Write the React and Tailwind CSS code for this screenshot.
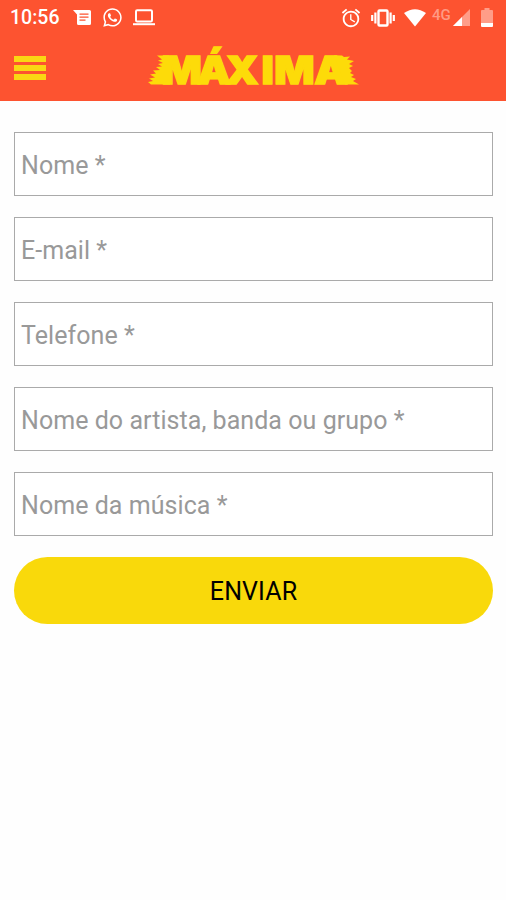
import { useState } from 'react';
import { FaWhatsapp } from 'react-icons/fa';
import { MdAlarm } from 'react-icons/md';

const FIELDS = [
    { name: 'nome', label: 'Nome *' },
    { name: 'email', label: 'E-mail *' },
    { name: 'telefone', label: 'Telefone *' },
    { name: 'artista', label: 'Nome do artista, banda ou grupo *' },
    { name: 'musica', label: 'Nome da música *' },
];

function StatusBar() {
    return (
        <div className="h-[35px] flex items-center justify-between pl-[10px] pr-[13px] text-white">
            <div className="flex items-center">
                <span className="w-[63px] pt-px text-[19.5px] leading-9 font-medium">10:56</span>
                {/* Messages */}
                <svg viewBox="0 0 19 16" className="w-[19px] h-4 mr-[10px]">
                    <path fill="#fff" d="M0 0H16.5Q18 0 18 1.5V13.5Q18 15 16.5 15H5.5Q4 15 4 13.5V4.5Z" />
                    <path stroke="#fd5330" strokeWidth="1.3" d="M6.5 4.2H15.5M6.5 7.2H15.5M6.5 10.2H12.5" />
                </svg>
                <FaWhatsapp className="w-[21px] h-[21px] mr-[10px]" />
                {/* Laptop */}
                <svg viewBox="0 0 22 17" className="w-[22px] h-[17px]" fill="none" stroke="#fff">
                    <rect x="3" y="1.2" width="16" height="11.3" rx="1.2" strokeWidth="2" />
                    <path d="M0 15.2H22" strokeWidth="2" />
                </svg>
            </div>
            <div className="flex items-center">
                <MdAlarm className="w-[22px] h-[22px] mr-[9px]" />
                {/* Vibrate */}
                <svg viewBox="0 0 24 18" className="w-6 h-[18px] mr-[9px]" fill="none" stroke="#fff" strokeWidth="2.2">
                    <rect x="7.5" y="1.5" width="9" height="15" rx="1" strokeWidth="2.4" />
                    <path d="M4.4 3.5V14.5M1.2 6V12M19.6 3.5V14.5M22.8 6V12" />
                </svg>
                {/* Wifi */}
                <svg viewBox="0 0 22 18" className="w-[22px] h-[18px] mr-[6px]">
                    <path fill="#fff" d="M0 4Q11-3.6 22 4L11 17.5Z" />
                </svg>
                <span className="w-[21px] h-6 text-[15px] leading-[18px] font-medium text-[#ff9a84]">4G</span>
                {/* Mobile signal */}
                <svg viewBox="0 0 17 17" className="w-[17px] h-[17px] mr-[11px]">
                    <path fill="#ff9d88" d="M17 0V17H0Z" />
                    <path fill="#fff" d="M9 8V17H0Z" />
                </svg>
                {/* Battery */}
                <svg viewBox="0 0 12 19" className="w-3 h-[19px]">
                    <path fill="#ff9d88" d="M3.5 0H8.5V2H11Q12 2 12 3V15H0V3Q0 2 1 2H3.5Z" />
                    <path fill="#fff" d="M0 15H12V18Q12 19 11 19H1Q0 19 0 18Z" />
                </svg>
            </div>
        </div>
    );
}

function Logo() {
    return (
        <svg viewBox="0 0 212 54" className="w-[212px] h-[54px] overflow-visible" fill="#fddb09">
            {/* Ragged left edge */}
            <path d="M9 14.5H21L22 43.5H3L0 41L5 40L1 37.5L7 36.5L2 33.5L8 32.5L5 29.5L12 29L8 26L14 25.5L10 23L15 22L10 19.5L14 18.5Z" />
            <g transform="scale(1.08 1)">
                <text
                    x="12.5 45.5 71.8 105 117 154"
                    y="43"
                    stroke="#fddb09"
                    strokeWidth="1.4"
                    className="font-['Inter','Liberation_Sans',sans-serif] text-[39px] font-black"
                >
                    MÁXIMA
                </text>
            </g>
            {/* Ragged right edge */}
            <path d="M186 14.3L194 14.5L196 16L202 15.5L199 18.5L206 20L201 23L205 25L201 27L204 30L202 32L206 34L203 36L208 38L205 40L211 43.5H197Z" />
        </svg>
    );
}

function Header() {
    return (
        <header className="h-[101px] bg-[#fd5330]">
            <StatusBar />
            <div className="flex items-center h-[66px] pl-[14px]">
                <button aria-label="Menu" className="flex flex-col gap-[3px] w-8 mr-[102px]">
                    <span className="h-[6px] bg-[#fad713]" />
                    <span className="h-[6px] bg-[#fad713]" />
                    <span className="h-[6px] bg-[#fad713]" />
                </button>
                <Logo />
            </div>
        </header>
    );
}

export default function App() {
    const [values, setValues] = useState({});

    const handleChange = (e) => {
        setValues({ ...values, [e.target.name]: e.target.value });
    };

    return (
        <div className="min-h-screen bg-[#fefefe] font-['Roboto','Liberation_Sans',sans-serif]">
            <Header />
            <form className="flex flex-col gap-[21px] pt-[31px] pl-[14px] pr-[13px]" onSubmit={(e) => e.preventDefault()}>
                {FIELDS.map((field) => (
                    <input
                        key={field.name}
                        name={field.name}
                        placeholder={field.label}
                        value={values[field.name] || ''}
                        onChange={handleChange}
                        className="h-16 w-full border-[1.5px] border-[#aaaaaa] bg-white px-[6px] pt-[2px] text-[25px] tracking-[0.05px] text-black placeholder:text-[#999999] outline-none"
                    />
                ))}
                <button className="h-[67px] rounded-full bg-[#f9d90b] pt-[2px] text-[25px] tracking-[0.1px] text-black">ENVIAR</button>
            </form>
        </div>
    );
}
